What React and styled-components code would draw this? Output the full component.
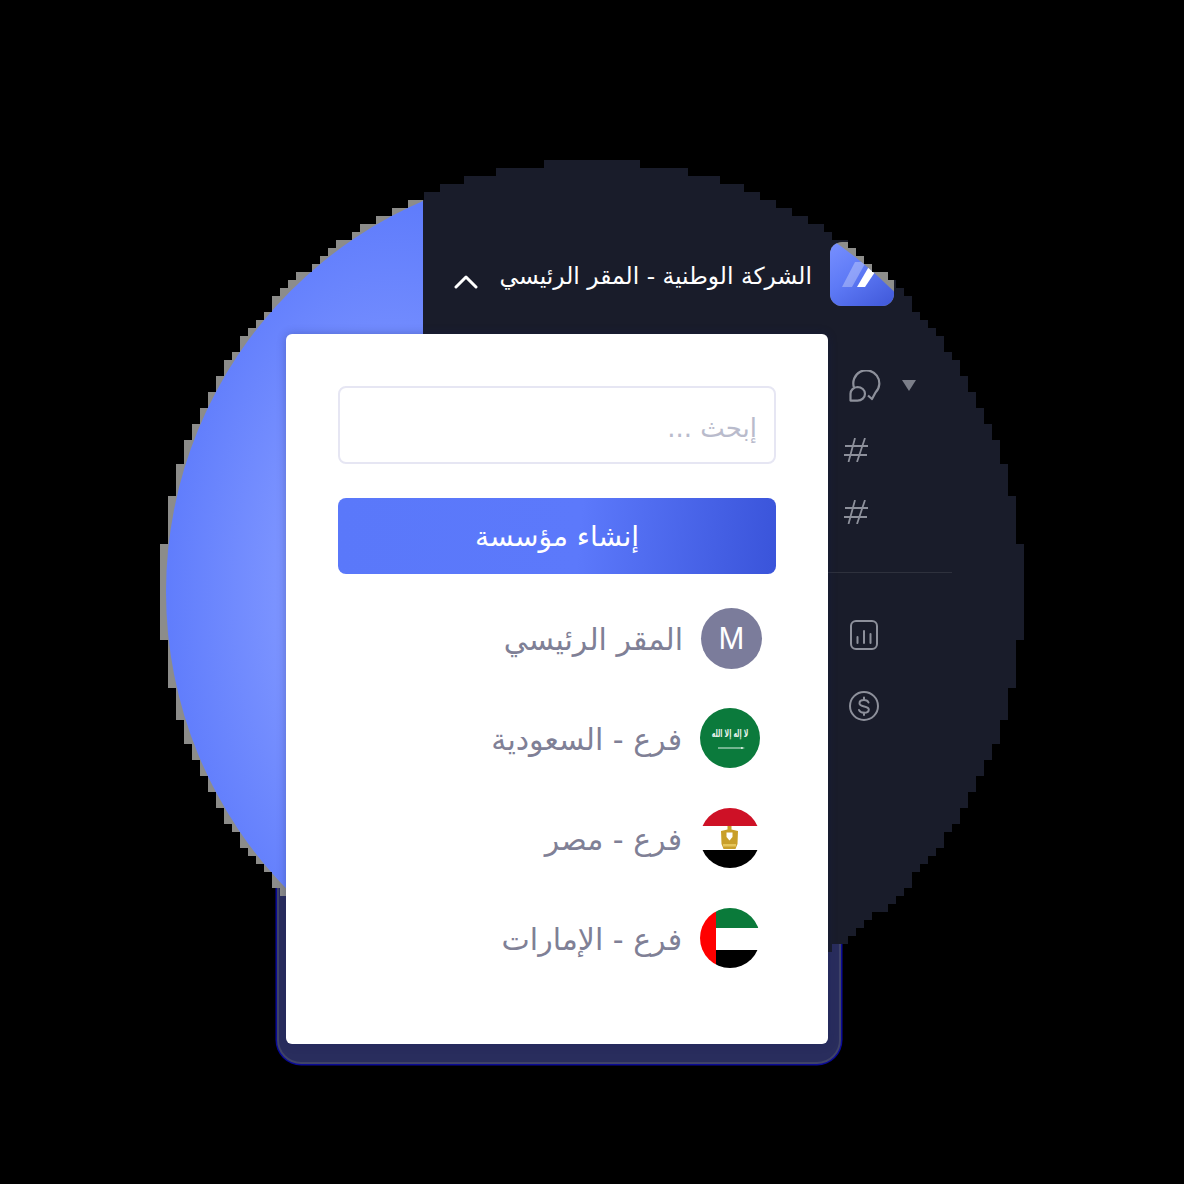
import styled, { createGlobalStyle } from "styled-components";

const GlobalStyle = createGlobalStyle`
  html, body {
    margin: 0;
    background: #000;
  }
  * { box-sizing: border-box; }
`;

const branches = [
  { name: "المقر الرئيسي", flag: "main" },
  { name: "فرع - السعودية", flag: "sa" },
  { name: "فرع - مصر", flag: "eg" },
  { name: "فرع - الإمارات", flag: "ae" },
];

// the disc edge in the picture is a coarse 8px stair, not a smooth circle
function stairClip(size, cell, radius) {
  const c = size / 2;
  const right = [];
  const left = [];
  for (let y = 0; y < size; y += cell) {
    let xl = -1;
    let xr = -1;
    for (let x = 0; x < size; x += cell) {
      if (Math.hypot(x + cell / 2 - c, y + cell / 2 - c) <= radius) {
        if (xl < 0) xl = x;
        xr = x + cell;
      }
    }
    if (xl < 0) continue;
    right.push(`${xr}px ${y}px`, `${xr}px ${y + cell}px`);
    left.unshift(`${xl}px ${y + cell}px`, `${xl}px ${y}px`);
  }
  return `polygon(${[...right, ...left].join(",")})`;
}

function ChatIcon() {
  return (
    <svg width="34" height="34" viewBox="0 0 34 34" fill="none" stroke="#8d909b" strokeWidth="2.2" strokeLinejoin="round">
      <path d="M6 17.500A13 13 0 1 1 27.500 22.500L24 29 20 25.500" />
      <path d="M9.500 17a7.500 6.800 0 0 1 0 13.600H2.500v-6.800a7.500 6.800 0 0 1 7-6.800z" />
    </svg>
  );
}

function HashIcon() {
  return (
    <svg width="24" height="24" viewBox="0 0 24 24" fill="none" stroke="#8d909b" strokeWidth="1.8">
      <path d="M4.500 24L11 0M13 24L21 0M1 8h23M0 17h23" />
    </svg>
  );
}

function ChartIcon() {
  return (
    <svg width="30" height="32" viewBox="0 0 30 32" fill="none" stroke="#8d909b" strokeWidth="2" strokeLinecap="round">
      <rect x="2" y="2" width="26" height="28" rx="5" />
      <path d="M8.500 24v-6M15 24V12M21.500 24v-9" />
    </svg>
  );
}

function DollarIcon() {
  return (
    <svg width="30" height="30" viewBox="0 0 30 30" fill="none" stroke="#8d909b" strokeWidth="2" strokeLinecap="round">
      <circle cx="15" cy="15" r="14" />
      <path d="M19.500 11.500c-.6-1.500-2.300-2.500-4.500-2.500-2.500 0-4.500 1.300-4.500 3.200 0 4.300 9.300 2.200 9.300 6.300 0 2-2 3.300-4.800 3.300-2.400 0-4.300-1-5-2.800M15 6.500V9M15 21.500V24" />
    </svg>
  );
}

function EgyptFlag() {
  return (
    <svg width="60" height="60" viewBox="0 0 60 60">
      <clipPath id="egc"><circle cx="30" cy="30" r="30" /></clipPath>
      <g clipPath="url(#egc)">
        <rect width="60" height="18" fill="#ce1126" />
        <rect y="18" width="60" height="24" fill="#fff" />
        <rect y="42" width="60" height="18" fill="#000" />
        <path d="M27.500 18h4v3.500l6.500 1.500-.5 13-2 5H23.500l-2-5-.5-13 6.500-1.500z" fill="#c99f2a" />
        <path d="M26.500 24.500h6v4.500l-3 3.500-3-3.500z" fill="#fff" />
        <path d="M23 36h13v2.500H23z" fill="#e6c65c" />
      </g>
    </svg>
  );
}

function UaeFlag() {
  return (
    <svg width="60" height="60" viewBox="0 0 60 60">
      <clipPath id="aec"><circle cx="30" cy="30" r="30" /></clipPath>
      <g clipPath="url(#aec)">
        <rect x="16" width="44" height="20" fill="#0a7a3a" />
        <rect x="16" y="20" width="44" height="22" fill="#fff" />
        <rect x="16" y="42" width="44" height="18" fill="#000" />
        <rect width="16" height="60" fill="#f00" />
      </g>
    </svg>
  );
}

function SaudiFlag() {
  return (
    <svg width="60" height="60" viewBox="0 0 60 60">
      <circle cx="30" cy="30" r="30" fill="#0b7a3c" />
      <text transform="translate(30 29) scale(.56 1)" textAnchor="middle" fontSize="11" fontWeight="bold" fill="#e8f3ec" fontFamily="'DejaVu Sans', sans-serif" direction="rtl">لا إله إلا الله</text>
      <path d="M18 40h25" stroke="#dcefe3" strokeWidth="1" />
      <path d="M41 39l4 1-4 1z" fill="#dcefe3" />
    </svg>
  );
}

function BranchIcon({ flag }) {
  if (flag === "main") return <Avatar>M</Avatar>;
  return (
    <FlagBox>
      {flag === "sa" && <SaudiFlag />}
      {flag === "eg" && <EgyptFlag />}
      {flag === "ae" && <UaeFlag />}
    </FlagBox>
  );
}

export default function App() {
  return (
    <Stage>
      <GlobalStyle />
      <BackPanel />
      <Disc style={{ clipPath: stairClip(864, 8, 430.6) }}>
        <BlueSide />
        <DarkSide>
          <Header>
            <Chevron width="24" height="14" viewBox="0 0 24 14" fill="none" stroke="#fff" strokeWidth="3" strokeLinecap="round" strokeLinejoin="round">
              <path d="M2 12L12 2l10 10" />
            </Chevron>
            <CompanyName dir="rtl">الشركة الوطنية - المقر الرئيسي</CompanyName>
            <LogoFringe>
              <Logo>
                <svg width="64" height="64" viewBox="0 0 64 64">
                  <path d="M25 20h11L22 45H12z" fill="#fff" fillOpacity="0.3" />
                  <path d="M41 21h10L35 45H27z" fill="#fff" />
                </svg>
              </Logo>
            </LogoFringe>
          </Header>
          <Nav>
            <ChatRow>
              <ChatIcon />
              <Caret />
            </ChatRow>
            <HashRow $top={34}><HashIcon /></HashRow>
            <HashRow $top={38}><HashIcon /></HashRow>
            <Divider />
            <IconRow $top={46}><ChartIcon /></IconRow>
            <IconRow $top={40}><DollarIcon /></IconRow>
          </Nav>
        </DarkSide>
      </Disc>
      <Card dir="rtl">
        <SearchBox placeholder="إبحث ..." />
        <CreateButton>إنشاء مؤسسة</CreateButton>
        <BranchList>
          {branches.map((b) => (
            <BranchRow key={b.flag} $main={b.flag === "main"}>
              <BranchIcon flag={b.flag} />
              <BranchName>{b.name}</BranchName>
            </BranchRow>
          ))}
        </BranchList>
      </Card>
    </Stage>
  );
}

const Stage = styled.div`
  position: relative;
  width: 1184px;
  height: 1184px;
  background: #000;
  overflow: hidden;
  font-family: "DejaVu Sans", "Noto Sans", sans-serif;
`;

const BackPanel = styled.div`
  position: absolute;
  left: 277px;
  top: 700px;
  width: 564px;
  height: 364px;
  border-radius: 24px;
  background: #292d5d;
  border: 2px solid #3f4368;
  box-shadow: 0 0 0 1.5px #0a0a96;
`;

const Disc = styled.div`
  position: absolute;
  left: 160px;
  top: 160px;
  width: 864px;
  height: 864px;
  display: flex;
  background: #191c2a;
`;

const BlueSide = styled.div`
  position: relative;
  width: 263px;
  overflow: hidden;
  background: #8c8c8a;
  &::before {
    content: "";
    position: absolute;
    left: 6px;
    top: 6px;
    width: 852px;
    height: 852px;
    border-radius: 50%;
    background: radial-gradient(ellipse 230px 390px at 226px 426px, #869cff 0%, #7b93ff 50%, #5f7cfc 100%);
  }
`;

const DarkSide = styled.div`
  flex: 1;
  padding-top: 80px;
`;

const Header = styled.div`
  height: 66px;
  display: flex;
  align-items: center;
  padding-left: 31px;
`;

const Chevron = styled.svg`
  margin-top: 18px;
  flex: none;
`;

const CompanyName = styled.div`
  width: 312px;
  margin: 6px 0 0 22px;
  color: #fff;
  font-size: 23.4px;
  white-space: nowrap;
`;

const LogoFringe = styled.div`
  width: 64px;
  height: 64px;
  margin: 2px 0 0 18px;
  border-radius: 12px;
  background: #8e8e8c;
`;

const Logo = styled.div`
  width: 64px;
  height: 64px;
  border-radius: 12px;
  background: linear-gradient(145deg, #7890ff 0%, #5e7af6 45%, #3f57d8 100%);
  clip-path: circle(426px at -238px 350px);
`;

const Nav = styled.div`
  width: 529px;
  margin-top: 64px;
  display: flex;
  flex-direction: column;
`;

const ChatRow = styled.div`
  height: 34px;
  padding-left: 425px;
  display: flex;
  align-items: center;
  gap: 20px;
`;

const Caret = styled.span`
  width: 0;
  height: 0;
  margin-bottom: 3px;
  border-left: 7.5px solid transparent;
  border-right: 7.5px solid transparent;
  border-top: 11px solid #7b7e89;
`;

const HashRow = styled.div`
  height: 24px;
  margin-top: ${({ $top }) => $top}px;
  padding-left: 421px;
  display: flex;
`;

const Divider = styled.div`
  height: 1px;
  margin-top: 48px;
  background: #2e313d;
`;

const IconRow = styled.div`
  margin-top: ${({ $top }) => $top}px;
  padding-left: 426px;
  display: flex;
`;

const Card = styled.div`
  position: absolute;
  left: 286px;
  top: 334px;
  width: 542px;
  height: 710px;
  padding: 52px;
  background: #fff;
  border-radius: 6px;
  box-shadow: 0 0 10px rgba(20, 30, 90, 0.3);
  display: flex;
  flex-direction: column;
`;

const SearchBox = styled.input`
  height: 78px;
  padding: 6px 17px 0;
  border: 2px solid #e6e6f3;
  border-radius: 8px;
  outline: none;
  background: #fff;
  font-family: inherit;
  font-size: 26px;
  &::placeholder { color: #b9bbcc; opacity: 1; }
`;

const CreateButton = styled.button`
  height: 76px;
  margin-top: 34px;
  padding-top: 2px;
  border: none;
  border-radius: 8px;
  color: #fff;
  font-family: inherit;
  font-size: 28px;
  background: linear-gradient(95deg, #5a78fa 0%, #5c79fb 55%, #3a54da 100%);
`;

const BranchList = styled.div`
  margin-top: 34px;
  display: flex;
  flex-direction: column;
  gap: 40px;
`;

const BranchRow = styled.div`
  height: 60px;
  display: flex;
  align-items: center;
  gap: 18px;
  padding-right: ${({ $main }) => ($main ? "14px" : "16px")};
`;

const Avatar = styled.div`
  width: 61px;
  height: 61px;
  border-radius: 50%;
  background: #7b7c9b;
  color: #fff;
  font-family: "Liberation Sans", sans-serif;
  font-size: 31px;
  padding-top: 2px;
  display: flex;
  align-items: center;
  justify-content: center;
`;

const FlagBox = styled.div`
  width: 60px;
  height: 60px;
  display: flex;
`;

const BranchName = styled.div`
  padding-top: 2px;
  color: #7f8096;
  font-size: 30px;
  white-space: nowrap;
`;
